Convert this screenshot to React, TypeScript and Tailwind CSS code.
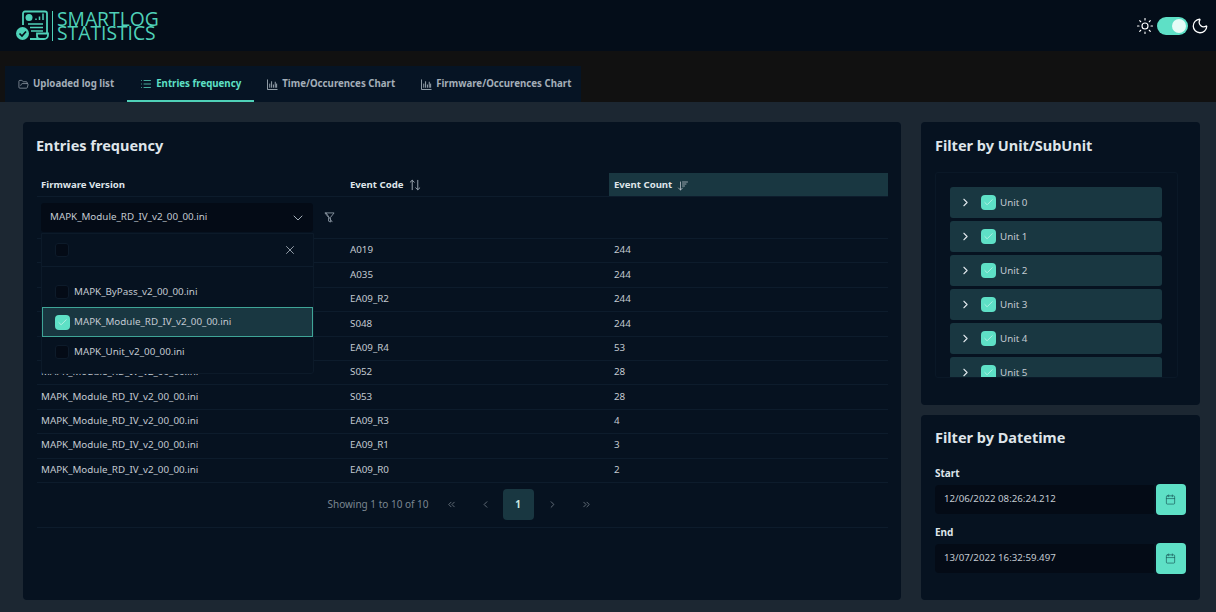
import { ArrowDownWideNarrow, Calendar, Check, ChevronDown, ChevronLeft, ChevronRight, ChevronsLeft, ChevronsRight, FolderOpen, List, Moon, Sun, X } from "lucide-react";

const rows = [
  ["A019", "244"],
  ["A035", "244"],
  ["EA09_R2", "244"],
  ["S048", "244"],
  ["EA09_R4", "53"],
  ["S052", "28"],
  ["S053", "28"],
  ["EA09_R3", "4"],
  ["EA09_R1", "3"],
  ["EA09_R0", "2"],
];

const units = ["Unit 0", "Unit 1", "Unit 2", "Unit 3", "Unit 4", "Unit 5"];

function ChartIcon() {
  return (
    <svg width="11" height="11" viewBox="0 0 12 12" fill="none" stroke="currentColor" strokeWidth="1">
      <path d="M0.5 0.5V11.5H11.5" />
      <path d="M3 9.5V5M5 9.5V2.5M7 9.5V6M9 9.5V3M10.5 9.5V5" />
    </svg>
  );
}

function SortIcon() {
  return (
    <svg width="12" height="12" viewBox="0 0 13 12" fill="none" stroke="#a3aeb8" strokeWidth="1">
      <path d="M3.5 11.5V0.8M1 3.2L3.5 0.8L6 3.2" />
      <path d="M9.5 0.5V11.2M7 8.8L9.5 11.2L12 8.8" />
    </svg>
  );
}

function Logo() {
  return (
    <svg width="36" height="32" viewBox="0 0 36 32" fill="none" stroke="#4fd1b8" strokeWidth="1.8">
      <path d="M7 15V3.5A2 2 0 0 1 9 1.5H29A2 2 0 0 1 31 3.5V23" />
      <path d="M14 29H28A4 4 0 0 0 32 25V23.5H21V26A3 3 0 0 0 24 29" />
      <circle cx="13" cy="7.5" r="3.5" fill="#4fd1b8" stroke="none" />
      <path d="M20 10V8.5M23.5 10V6.5M27 10V3.5" strokeWidth="1.5" />
      <path d="M12 14H27M14 17.5H27M15 21H27" strokeWidth="1.3" />
      <circle cx="6.5" cy="23.5" r="6.5" fill="#4fd1b8" stroke="none" />
      <path d="M3.5 23.5L6 26L10 21.5" stroke="#040d19" strokeWidth="1.7" />
    </svg>
  );
}

function Tab({ label, icon, active }: { label: string; icon: React.ReactNode; active?: boolean }) {
  return (
    <div
      className={
        active
          ? "flex h-[36px] items-center gap-[4px] border-y-2 border-t-transparent border-b-[#4fd1b8] px-[13px] text-[9.7px] font-bold whitespace-nowrap text-[#5ee0c6]"
          : "flex h-[36px] items-center gap-[4px] px-[13px] text-[9.7px] font-bold whitespace-nowrap text-[#a3aeb8]"
      }
    >
      {icon}
      <span>{label}</span>
    </div>
  );
}

function Box({ checked }: { checked?: boolean }) {
  return checked ? (
    <div className="flex h-[15px] w-[15px] shrink-0 items-center justify-center rounded-[4px] bg-[#5ee0c6]">
      <Check size={11} strokeWidth={1.5} className="text-[#d4f6ee]" />
    </div>
  ) : (
    <div className="h-[14px] w-[14px] shrink-0 rounded-[3px] border border-[#0d1b2a] bg-[#040b16]" />
  );
}

function DateField({ label, value }: { label: string; value: string }) {
  return (
    <div>
      <div className="mb-[4px] text-[10px] leading-[14px] font-bold text-[#dfe5ea]">{label}</div>
      <div className="flex items-center">
        <div className="flex h-[29px] w-[222px] items-center rounded-l-[4px] bg-[#040b16] pl-[9px] text-[9.7px] text-[#c3cad1]">
          {value}
        </div>
        <div className="ml-[2px] flex h-[31px] w-[31px] items-center justify-center rounded-[4px] bg-[#5ee0c6]">
          <Calendar size={11} strokeWidth={1.5} className="text-[#1a5a5a]" />
        </div>
      </div>
    </div>
  );
}

export default function App() {
  return (
    <div className="flex h-[612px] w-[1216px] flex-col overflow-hidden bg-[#111111] font-['Noto_Sans',sans-serif]">
      <header className="flex h-[51px] shrink-0 items-center justify-between bg-[#040d19] pr-[7px] pl-[16px]">
        <div className="flex items-center">
          <Logo />
          <div className="h-[30px] w-px bg-[#4fd1b8]" />
          <div className="ml-[4px] font-['Open_Sans',sans-serif] text-[19.3px] leading-[14px] font-medium text-[#4fd1b8]">
            <div>SMARTLOG</div>
            <div>STATISTICS</div>
          </div>
        </div>
        <div className="flex items-center gap-[3px] text-white">
          <Sun size={18} strokeWidth={1.5} />
          <div className="flex h-[18px] w-[31px] items-center justify-end rounded-full bg-[#5ee0c6] pr-[2px]">
            <div className="h-[14px] w-[14px] rounded-full bg-[#e6fbf6]" />
          </div>
          <Moon size={18} strokeWidth={1.7} />
        </div>
      </header>

      <div className="h-[15px] shrink-0" />

      <nav className="ml-[5px] flex h-[36px] w-[576px] shrink-0 bg-[#061424]">
        <Tab label="Uploaded log list" icon={<FolderOpen size={11} strokeWidth={1.5} />} />
        <Tab label="Entries frequency" icon={<List size={12} strokeWidth={1.5} />} active />
        <Tab label="Time/Occurences Chart" icon={<ChartIcon />} />
        <Tab label="Firmware/Occurences Chart" icon={<ChartIcon />} />
      </nav>

      <main className="flex min-h-0 flex-1 gap-[20px] bg-[#1c2732] pt-[20px] pr-[16px] pb-[12px] pl-[23px]">
        <section className="relative flex w-[878px] flex-col rounded-[4px] bg-[#061220] px-[14px] pt-[12px]">
          <h2 className="-ml-px text-[14.5px] leading-[22px] font-bold text-[#dfe5ea]">Entries frequency</h2>

          <div className="mt-[17px] w-[851px] text-[9.8px] text-[#c3cad1]">
            <div className="grid h-[24px] grid-cols-[308px_264px_279px] items-center border-b border-[#0d1c2c] text-[9.6px] font-bold text-[#dfe5ea]">
              <div className="mt-[2px] pl-[4px]">Firmware Version</div>
              <div className="mt-[2px] flex items-center gap-[6px] pl-[5px]">
                Event Code
                <SortIcon />
              </div>
              <div className="flex h-full items-center gap-[5px] bg-[#193741] pt-[2px] pl-[5px]">
                Event Count
                <ArrowDownWideNarrow size={12} strokeWidth={1.5} className="text-[#c3cad1]" />
              </div>
            </div>

            <div className="flex h-[42px] items-center border-b border-[#0d1c2c] pl-[4px]">
              <div className="flex h-[29px] w-[272px] items-center justify-between rounded-[3px] bg-[#040b16] pr-[7px] pl-[9px] text-[#c3cad1]">
                MAPK_Module_RD_IV_v2_00_00.ini
                <ChevronDown size={16} strokeWidth={1.5} className="text-[#a3aeb8]" />
              </div>
              <svg className="ml-[11px]" width="11" height="11" viewBox="0 0 12 12" fill="none" stroke="#8a96a2" strokeWidth="1">
                <path d="M1 1H11L7 6V11L5 10V6Z" />
                <path d="M2 0.5L9 11" />
              </svg>
            </div>

            {rows.map(([code, count]) => (
              <div key={code} className="grid h-[24.4px] grid-cols-[308px_264px_279px] items-center border-b border-[#0d1c2c]">
                <div className="pl-[4px]">MAPK_Module_RD_IV_v2_00_00.ini</div>
                <div className="pl-[5px]">{code}</div>
                <div className="pl-[5px]">{count}</div>
              </div>
            ))}

            <div className="flex h-[45px] items-center justify-center border-b border-[#0d1c2c] pr-[6px] text-[#67727d]">
              <span className="mr-[17px] text-[10px] text-[#7b8691]">Showing 1 to 10 of 10</span>
              <ChevronsLeft size={11} className="mr-[23px]" />
              <ChevronLeft size={11} className="mr-[12px]" />
              <div className="mr-[13px] flex h-[31px] w-[31px] items-center justify-center rounded-[4px] bg-[#193741] font-bold text-[#c9e8e2]">1</div>
              <ChevronRight size={11} className="mr-[23px]" />
              <ChevronsRight size={11} />
            </div>
          </div>

          <div className="absolute top-[111px] left-[18px] w-[273px] rounded-b-[3px] border border-[#0c1a29] bg-[#061220] text-[9.8px] text-[#c3cad1]">
            <div className="flex h-[33px] items-center justify-between border-b border-[#0d1c2c] pr-[16px] pl-[13px]">
              <Box />
              <X size={14} strokeWidth={1.5} className="text-[#a3aeb8]" />
            </div>
            <div className="pt-[10px] pb-[6px]">
              <div className="flex h-[30px] items-center gap-[5px] pl-[13px]">
                <Box />
                MAPK_ByPass_v2_00_00.ini
              </div>
              <div className="flex h-[30px] items-center gap-[4px] border border-[#3fa597] bg-[#193741] pl-[12px]">
                <Box checked />
                MAPK_Module_RD_IV_v2_00_00.ini
              </div>
              <div className="flex h-[30px] items-center gap-[5px] pl-[13px]">
                <Box />
                MAPK_Unit_v2_00_00.ini
              </div>
            </div>
          </div>
        </section>

        <aside className="flex w-[279px] flex-col gap-[10px]">
          <section className="h-[283px] rounded-[4px] bg-[#061220] px-[14px] pt-[12px]">
            <h2 className="text-[14.5px] leading-[22px] font-bold text-[#dfe5ea]">Filter by Unit/SubUnit</h2>
            <div className="mt-[16px] h-[206px] w-[243px] overflow-hidden rounded-[3px] border border-[#0a1827] pt-[14px] pr-[15px] pl-[14px]">
              <div className="flex flex-col gap-[3px]">
                {units.map((unit) => (
                  <div key={unit} className="flex h-[31px] shrink-0 items-center rounded-[3px] bg-[#193741] pl-[9px] text-[9.8px] text-[#c3cad1]">
                    <ChevronRight size={13} strokeWidth={2} className="mr-[9px] text-[#dfe5ea]" />
                    <Box checked />
                    <span className="mt-[2px] ml-[4px]">{unit}</span>
                  </div>
                ))}
              </div>
            </div>
          </section>

          <section className="flex-1 rounded-[4px] bg-[#061220] px-[14px] pt-[11px]">
            <h2 className="mb-[18px] text-[14.5px] leading-[22px] font-bold text-[#dfe5ea]">Filter by Datetime</h2>
            <div className="flex flex-col gap-[10px]">
              <DateField label="Start" value="12/06/2022 08:26:24.212" />
              <DateField label="End" value="13/07/2022 16:32:59.497" />
            </div>
          </section>
        </aside>
      </main>
    </div>
  );
}
